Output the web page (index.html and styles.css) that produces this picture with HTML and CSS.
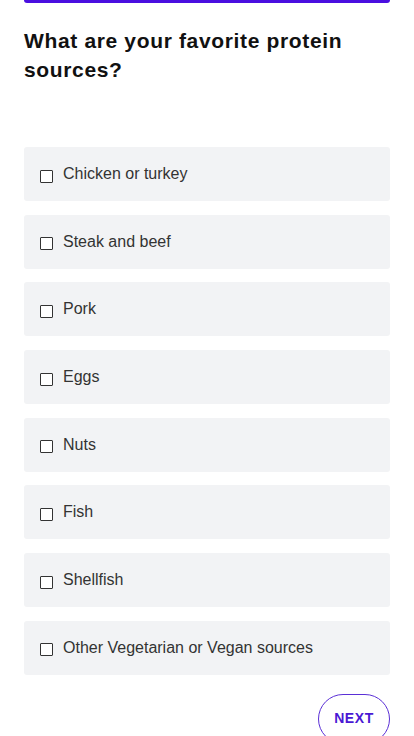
FILE: index.html
```html
<!DOCTYPE html>
<html lang="en">
<head>
<meta charset="utf-8">
<title>Protein sources</title>
<link rel="stylesheet" href="styles.css">
</head>
<body>
<div class="page">
  <div class="topbar"></div>
  <h1 class="question">What are your favorite protein sources?</h1>
  <div class="options">
    <label class="option"><input type="checkbox" class="box"><span class="text">Chicken or turkey</span></label>
    <label class="option"><input type="checkbox" class="box"><span class="text">Steak and beef</span></label>
    <label class="option"><input type="checkbox" class="box"><span class="text">Pork</span></label>
    <label class="option"><input type="checkbox" class="box"><span class="text">Eggs</span></label>
    <label class="option"><input type="checkbox" class="box"><span class="text">Nuts</span></label>
    <label class="option"><input type="checkbox" class="box"><span class="text">Fish</span></label>
    <label class="option"><input type="checkbox" class="box"><span class="text">Shellfish</span></label>
    <label class="option"><input type="checkbox" class="box"><span class="text">Other Vegetarian or Vegan sources</span></label>
  </div>
  <div class="actions">
    <button class="next">NEXT</button>
  </div>
</div>
</body>
</html>
```

FILE: styles.css
```css
html, body {
  margin: 0;
  padding: 0;
  background: #ffffff;
}
body {
  font-family: "Liberation Sans", Arial, sans-serif;
  color: #222;
}
.page {
  padding: 0 24px;
  display: flex;
  flex-direction: column;
}
.topbar {
  height: 3px;
  background: #4a0fe0;
  border-radius: 0 0 4px 4px;
}
.question {
  margin: 23px 0 0 0;
  font-size: 21px;
  line-height: 29px;
  font-weight: 700;
  color: #111;
  letter-spacing: 0.65px;
}
.options {
  margin-top: 63px;
  display: flex;
  flex-direction: column;
  gap: 13.7px;
}
.option {
  height: 54px;
  background: #f2f3f5;
  border-radius: 3px;
  display: flex;
  align-items: center;
  padding-left: 16px;
  box-sizing: border-box;
}
.box {
  appearance: none;
  -webkit-appearance: none;
  width: 13px;
  height: 13px;
  margin: 4px 10px 0 0;
  border: 1px solid #333;
  border-radius: 1px;
  background: #fff;
  box-sizing: border-box;
  flex: none;
}
.text {
  font-size: 16px;
  color: #333;
}
.actions {
  display: flex;
  justify-content: flex-end;
  margin-top: 19px;
}
.next {
  width: 72px;
  height: 50px;
  border: 1px solid #5a2fd6;
  border-radius: 25px;
  background: #fff;
  color: #4a18d4;
  font-family: "Liberation Sans", Arial, sans-serif;
  font-weight: 700;
  font-size: 14px;
  letter-spacing: 0.6px;
  padding: 0 0 1px 0;
}
```
